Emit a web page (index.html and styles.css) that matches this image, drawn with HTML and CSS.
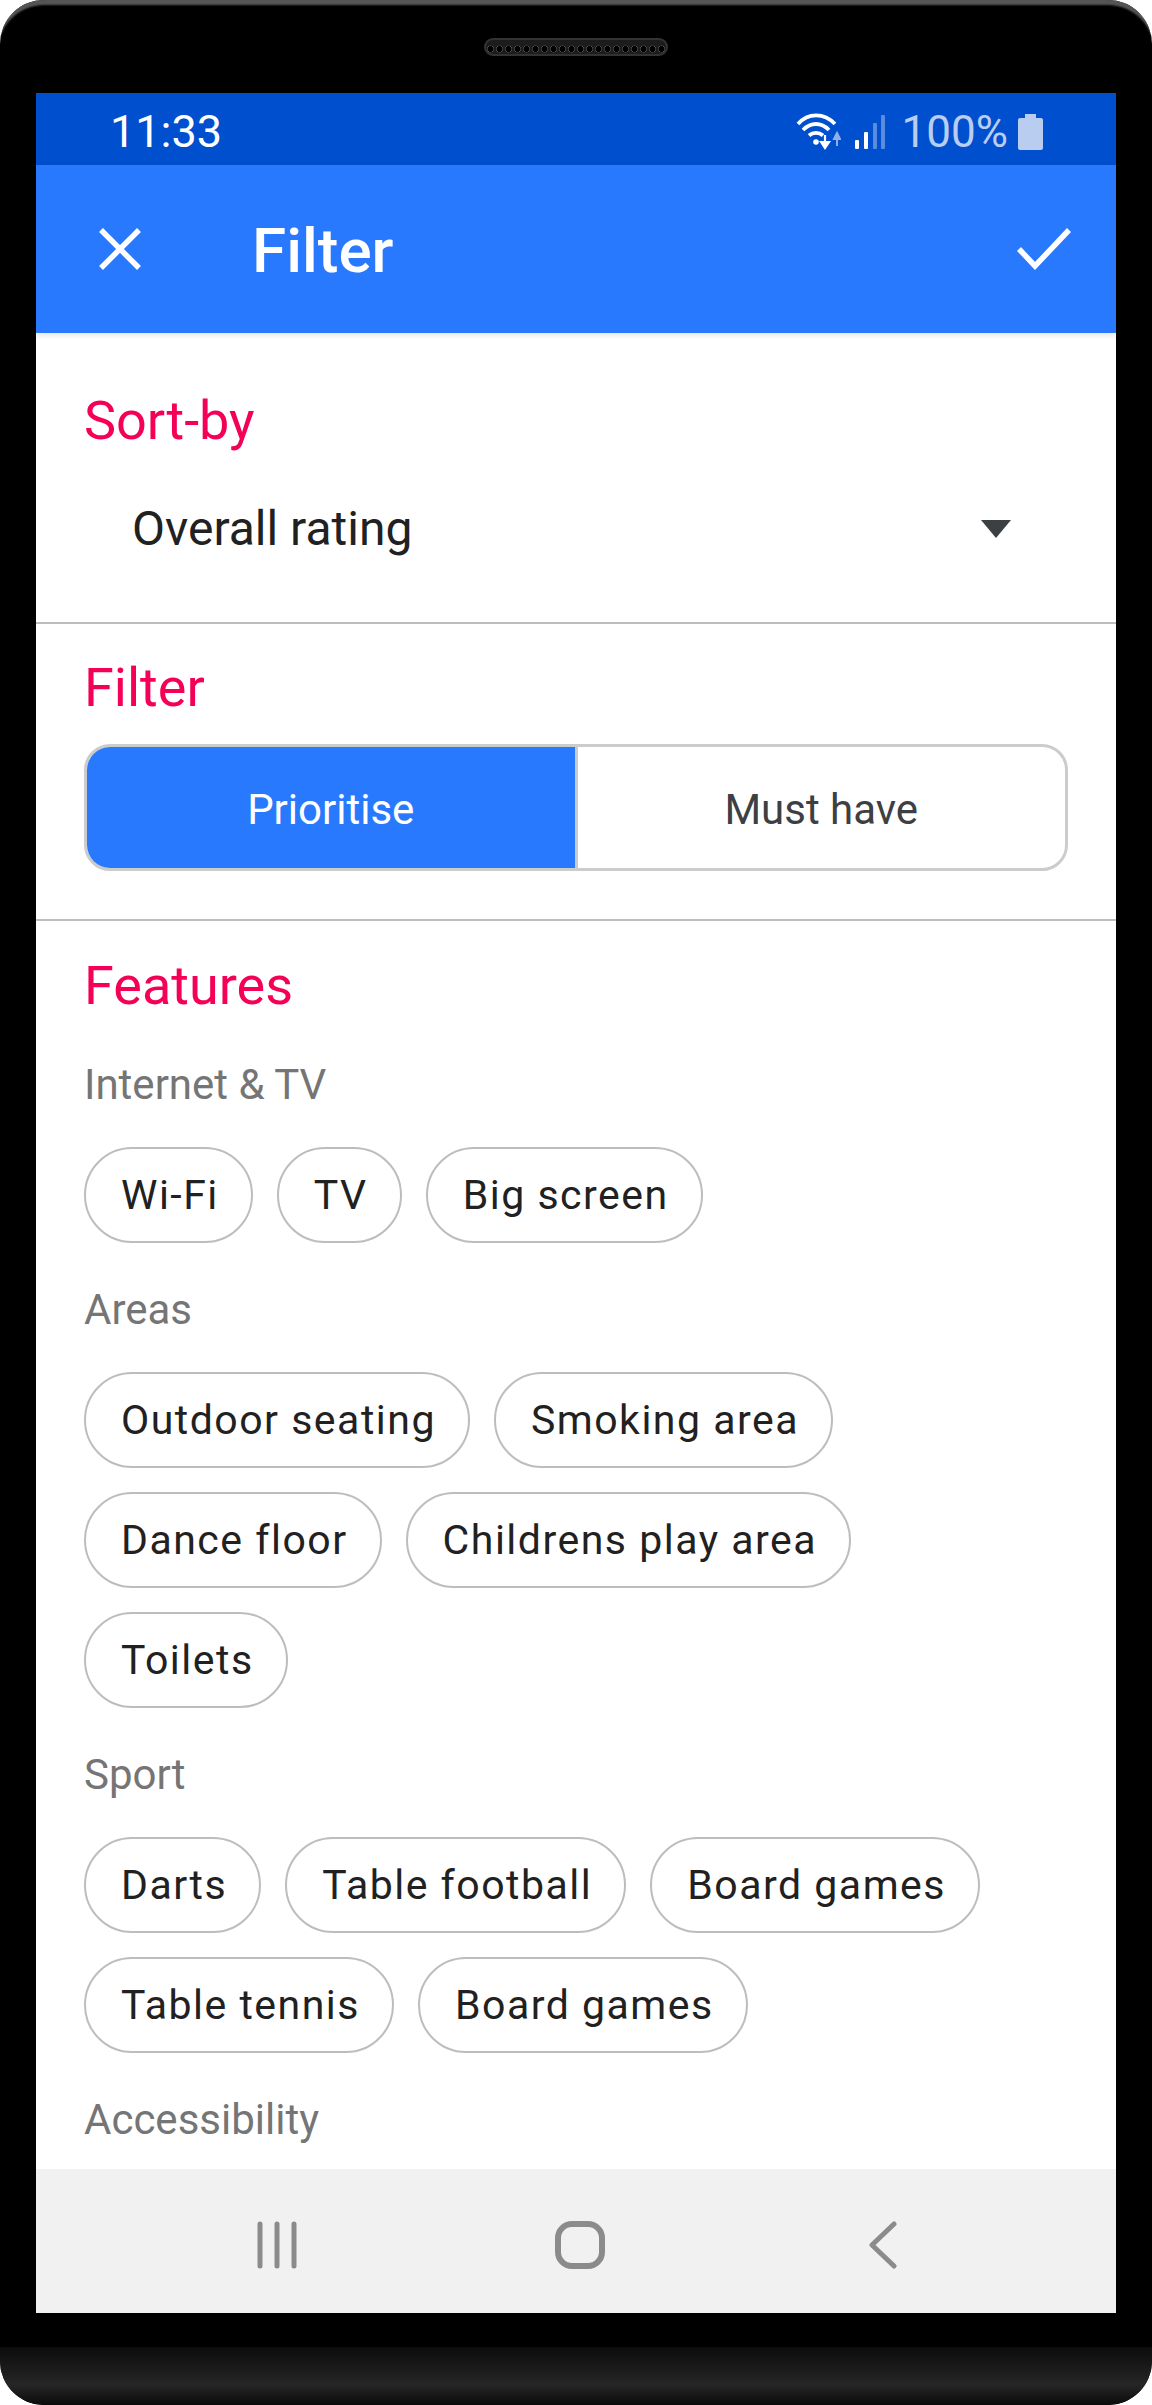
FILE: index.html
```html
<!DOCTYPE html>
<html lang="en">
<head>
<meta charset="utf-8">
<title>Filter</title>
<link rel="stylesheet" href="styles.css">
</head>
<body>
<div class="phone">
  <div class="top-bezel"><div class="speaker"></div></div>
  <div class="screen">
    <div class="status">
      <span class="time">11:33</span>
      <div class="status-right">
        <svg class="wifi" width="46" height="38" viewBox="0 0 46 38">
          <path d="M3 11C13 -0.500 29 -0.500 40 11" fill="none" stroke="#fff" stroke-width="3.800"/>
          <path d="M8 17C16 9 26 9 34 17" fill="none" stroke="#fff" stroke-width="3.800"/>
          <path d="M14 22.500C18 19 24 19 28 22.500" fill="none" stroke="#fff" stroke-width="3.800"/>
          <circle cx="21" cy="29" r="2.800" fill="#fff"/>
          <path d="M30 22V33M26 29L30 35L34 29Z" fill="#fff" stroke="#fff" stroke-width="2.200"/>
          <path d="M42 33V22M39 26L42 20L45 26Z" fill="#8fb0e8" stroke="#8fb0e8" stroke-width="2"/>
        </svg>
        <svg class="signal" width="32" height="36" viewBox="0 0 32 36">
          <rect x="1" y="26" width="4" height="9" rx="1" fill="#fff"/>
          <rect x="10" y="18" width="4" height="17" rx="1" fill="#fff"/>
          <rect x="19" y="9" width="4" height="26" rx="1" fill="#5b8bdc"/>
          <rect x="27" y="1" width="4" height="34" rx="1" fill="#5b8bdc"/>
        </svg>
        <span class="percent">100%</span>
        <svg class="battery" width="25" height="36" viewBox="0 0 25 36">
          <path d="M7 0H18V4H23A2 2 0 0 1 25 6V34A2 2 0 0 1 23 36H2A2 2 0 0 1 0 34V6A2 2 0 0 1 2 4H7Z" fill="#b9cdf0"/>
        </svg>
      </div>
    </div>
    <header class="appbar">
      <svg class="icon-close" width="44" height="44" viewBox="0 0 44 44"><path d="M3 3L41 41M41 3L3 41" fill="none" stroke="#fff" stroke-width="5.500"/></svg>
      <h1 class="title">Filter</h1>
      <svg class="icon-check" width="54" height="42" viewBox="0 0 54 42"><path d="M2 21L18 38L52 2" fill="none" stroke="#fff" stroke-width="5.500"/></svg>
    </header>
    <main class="content">
      <section class="section sort">
        <h2 class="heading">Sort-by</h2>
        <div class="select">
          <span>Overall rating</span>
          <span class="caret"></span>
        </div>
      </section>
      <section class="section filter">
        <h2 class="heading">Filter</h2>
        <div class="segments">
          <div class="segment on">Prioritise</div>
          <div class="segment">Must have</div>
        </div>
      </section>
      <section class="section features">
        <h2 class="heading">Features</h2>
        <h3 class="label first">Internet &amp; TV</h3>
        <div class="chips">
          <span class="chip">Wi-Fi</span><span class="chip">TV</span><span class="chip">Big screen</span>
        </div>
        <h3 class="label">Areas</h3>
        <div class="chips">
          <span class="chip">Outdoor seating</span><span class="chip">Smoking area</span><span class="chip">Dance floor</span><span class="chip">Childrens play area</span><span class="chip">Toilets</span>
        </div>
        <h3 class="label">Sport</h3>
        <div class="chips">
          <span class="chip">Darts</span><span class="chip">Table football</span><span class="chip">Board games</span><span class="chip">Table tennis</span><span class="chip">Board games</span>
        </div>
        <h3 class="label">Accessibility</h3>
      </section>
    </main>
    <nav class="navbar">
      <svg width="40" height="48" viewBox="0 0 40 48" class="nav-recent">
        <path d="M3 3V45M20 3V45M37 3V45" fill="none" stroke="#8b8b8b" stroke-width="5" stroke-linecap="round"/>
      </svg>
      <svg width="50" height="48" viewBox="0 0 50 48" class="nav-home">
        <rect x="3" y="3" width="44" height="42" rx="14" fill="none" stroke="#8b8b8b" stroke-width="6"/>
      </svg>
      <svg width="28" height="48" viewBox="0 0 28 48" class="nav-back">
        <path d="M25 3L3 24L25 45" fill="none" stroke="#8b8b8b" stroke-width="5" stroke-linecap="round" stroke-linejoin="round"/>
      </svg>
    </nav>
  </div>
  <div class="bottom-bezel"><div class="chin"></div></div>
</div>
</body>
</html>
```
FILE: styles.css
```css
* { box-sizing: border-box; }
html, body { margin: 0; padding: 0; background: #fff; }
body { font-family: Roboto, "Liberation Sans", sans-serif; }
.phone {
  width: 1152px;
  height: 2405px;
  background: #000;
  border-radius: 44px;
  overflow: hidden;
  display: flex;
  flex-direction: column;
  box-shadow: inset 0 7px 2px -2px #555;
}
.top-bezel {
  height: 93px;
  flex: none;
  padding-top: 38px;
  display: flex;
  justify-content: center;
}
.speaker {
  width: 184px;
  height: 18px;
  border-radius: 9px;
  background-color: #1c1c1c;
  background-image: radial-gradient(circle at 4.500px 9px, #000 2.800px, #555 3.200px, transparent 3.800px);
  background-size: 9px 18px;
  border: 2px solid #333;
}
.screen {
  height: 2220px;
  flex: none;
  margin: 0 36px 0 36px;
  background: #fff;
  display: flex;
  flex-direction: column;
  overflow: hidden;
}
.status {
  height: 72px;
  flex: none;
  background: #004fce;
  color: #fff;
  display: flex;
  align-items: center;
  justify-content: space-between;
  padding: 6px 73px 0 74px;
}
.time { font-size: 45px; line-height: 52px; }
.status-right { display: flex; align-items: center; }
.wifi { margin-right: 13px; }
.signal { margin-right: 16px; }
.percent { font-size: 44px; line-height: 52px; color: #b9cdf0; margin-right: 10px; }
.appbar {
  height: 168px;
  flex: none;
  background: #2979ff;
  display: flex;
  align-items: center;
  padding: 0 45px 0 62px;
  box-shadow: 0 2px 6px rgba(0,0,0,.12);
  position: relative;
}
.title {
  margin: 3px 0 0 110px;
  flex: 1;
  font-size: 62px;
  line-height: 68px;
  font-weight: 500;
  color: #fff;
}
.content { flex: 1; min-height: 0; overflow: hidden; }
.section { padding: 0 48px; border-bottom: 2px solid #bdbdbd; }
.sort { height: 291px; padding-top: 58px; }
.filter { height: 297px; padding-top: 34px; }
.features { border-bottom: 0; padding-top: 35px; }
.heading {
  margin: 0;
  font-size: 54px;
  line-height: 60px;
  font-weight: 400;
  color: #f50057;
}
.select {
  display: flex;
  justify-content: space-between;
  align-items: center;
  margin-top: 48px;
  padding: 0 57px 0 48px;
  font-size: 48px;
  line-height: 60px;
  color: #212121;
}
.caret {
  width: 0;
  height: 0;
  border-left: 15px solid transparent;
  border-right: 15px solid transparent;
  border-top: 18px solid #3c4043;
}
.segments {
  display: flex;
  height: 127px;
  margin-top: 26px;
  border: 3px solid #cccccc;
  border-radius: 26px;
  overflow: hidden;
}
.segment {
  flex: 1;
  display: flex;
  align-items: center;
  justify-content: center;
  padding-top: 3px;
  font-size: 42px;
  color: #3c4043;
}
.segment.on {
  background: #2979ff;
  color: #fff;
  border-right: 3px solid #cccccc;
}
.label {
  margin: 43px 0 38px;
  font-size: 42px;
  line-height: 48px;
  font-weight: 400;
  color: #757575;
}
.label.first { margin-top: 45px; margin-bottom: 38px; }
.chips { display: flex; flex-wrap: wrap; gap: 24px; }
.chip {
  height: 96px;
  display: flex;
  align-items: center;
  padding: 0 32px 0 35px;
  border: 2px solid #bdbdbd;
  border-radius: 48px;
  font-size: 41px;
  letter-spacing: 1.500px;
  color: #212121;
}
.navbar {
  height: 144px;
  flex: none;
  background: #f1f1f1;
  position: relative;
  display: flex;
  align-items: center;
  padding: 8px 0 0 221px;
}
.nav-home { margin-left: 258px; }
.nav-back { margin-left: 264px; }
.bottom-bezel { flex: 1; display: flex; flex-direction: column; justify-content: flex-end; }
.chin { height: 58px; background: linear-gradient(#0c0c0c, #262626 65%, #0a0a0a); }
```
